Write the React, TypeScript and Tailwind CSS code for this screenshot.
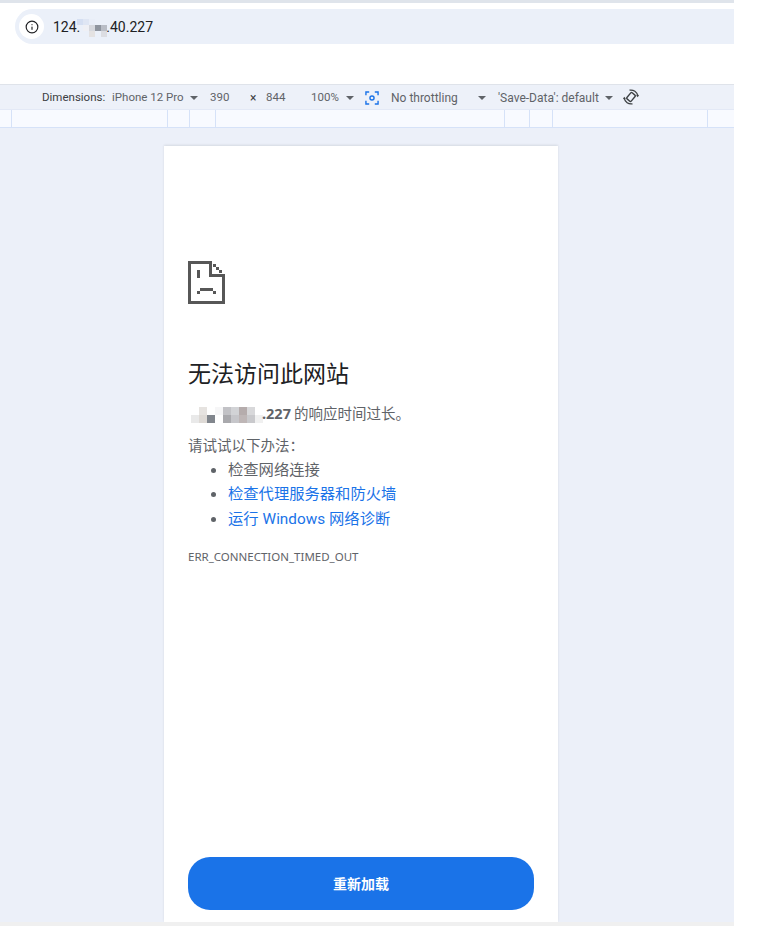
import React from 'react';
import { Info } from 'lucide-react';

const cjk = '[font-family:"Noto_Sans","Noto_Sans_CJK_SC",sans-serif]';

const Caret: React.FC<{ className?: string }> = ({ className }) => (
    <svg width="8" height="4" viewBox="0 0 8 4" className={className}>
        <path d="M0 0h8L4 4z" fill="#5f6368" />
    </svg>
);

const Mosaic: React.FC<{ cell: number; rows: string[][] }> = ({ cell, rows }) => (
    <span className="inline-flex flex-col align-middle">
        {rows.map((row, i) => (
            <span key={i} className="flex">
                {row.map((color, j) => (
                    <span key={j} style={{ width: cell, height: cell, background: color }} />
                ))}
            </span>
        ))}
    </span>
);

const addressMosaic = [
    ['#d5dff2', '#dfe6f4', '#e9eef8', 'transparent', 'transparent'],
    ['transparent', '#eff0f5', '#d6d8de', '#8f959f', '#b9bdc6'],
    ['transparent', 'transparent', '#e4e2e2', 'transparent', '#dcdde2'],
];

const hostMosaic = [
    ['#ffffff', '#e6e3e0', '#ffffff', '#f6f6f7', '#c2c2c6', '#d2d3d6', '#b5acac', '#d8d8da', '#ffffff'],
    ['#e9e9e9', '#dedad6', '#81868d', '#ffffff', '#a9a9ad', '#c6c6ca', '#beb6b6', '#c9c9cc', '#f0f0f0'],
];

const SadTab: React.FC = () => (
    <svg width="37" height="43" viewBox="0 0 37 43" fill="#575757" className="block">
        <rect x="0" y="0" width="3" height="43" />
        <rect x="0" y="0" width="24" height="3" />
        <rect x="0" y="40" width="37" height="3" />
        <rect x="34" y="13" width="3" height="30" />
        <rect x="21" y="0" width="3" height="16" />
        <rect x="21" y="13" width="16" height="3" />
        <rect x="25" y="3" width="3" height="3" />
        <rect x="28" y="6" width="3" height="3" />
        <rect x="31" y="9" width="3" height="3" />
        <rect x="9" y="9" width="3" height="8" />
        <rect x="12" y="27" width="13" height="3" />
        <rect x="9" y="30" width="3" height="3" />
        <rect x="25" y="30" width="3" height="3" />
    </svg>
);

const CaptureIcon: React.FC = () => (
    <svg width="14" height="14" viewBox="0 0 15 15" fill="none" stroke="#1a73e8" strokeWidth="1.500">
        <path d="M1 4.500V1h3.500M10.500 1H14v3.500M14 10.500V14h-3.500M4.500 14H1v-3.500" />
        <circle cx="7.500" cy="7.500" r="2.200" />
    </svg>
);

// device rotation: tilted phone between two arc arrows
const RotateIcon: React.FC<{ className?: string }> = ({ className }) => (
    <svg width="16" height="18" viewBox="0 0 16 18" fill="none" className={`shrink-0 ${className ?? ''}`}>
        <g transform="rotate(40 8 9)">
            <rect x="5.200" y="5" width="5.600" height="8" rx="1" stroke="#3c4043" strokeWidth="1.400" />
        </g>
        <path d="M6.500 2.200A7 7 0 0 1 14.800 8" stroke="#3c4043" strokeWidth="1.300" />
        <path d="M9.500 15.800A7 7 0 0 1 1.200 10" stroke="#3c4043" strokeWidth="1.300" />
        <path d="M16 6.800l-1.100 2.500-1.900-1.900zM0 11.200l1.100-2.500 1.900 1.900z" fill="#3c4043" />
    </svg>
);

const rulerCells = ['w-[12px]', 'w-[156px]', 'w-[22px]', 'w-[26px]', 'w-[289px]', 'w-[25px]', 'w-[23px]', 'w-[155px]'];

const App: React.FC = () => {
    return (
        <div className={`w-[779px] h-[926px] overflow-hidden bg-white flex flex-col ${cjk}`}>
            <div className="h-[3px] w-[734px] bg-[#dfe4eb]" />
            <div className="w-[734px] pl-[15px] pt-[6px]">
                <div className="h-[35px] bg-[#ebf0f9] rounded-l-[18px] flex items-center pl-1">
                    <div className="w-[25px] h-[25px] rounded-full bg-white flex items-center justify-center">
                        <Info size={14} strokeWidth={2} color="#202124" />
                    </div>
                    <span className="ml-[9px] pt-[2px] text-[14px] text-[#202124] flex items-center [font-family:Roboto,sans-serif]">
                        124.
                        <span className="-ml-[3px]">
                            <Mosaic cell={6} rows={addressMosaic} />
                        </span>
                        <span className="-ml-[1px]">.40.227</span>
                    </span>
                </div>
            </div>
            <div className="w-[734px] mt-[40px] h-[26px] pt-[2px] bg-[#edf1f9] border-t border-[#dfe3ea] border-b border-b-[#e3e9f6] flex items-center text-[12px] text-[#5f6368] whitespace-nowrap [font-family:Roboto,sans-serif]">
                <span className="ml-[42px] w-[63px] text-[11.500px] text-[#3c4043]">Dimensions:</span>
                <span className="ml-[7px] w-[73px] text-[11.500px]">iPhone 12 Pro</span>
                <Caret className="ml-[5px]" />
                <span className="ml-[12px] w-[19px] text-[11.500px]">390</span>
                <span className="ml-[21px] w-[8px] text-[#3c4043]">×</span>
                <span className="ml-[8px] w-[19px] text-[11.500px]">844</span>
                <span className="ml-[26px] w-[29px] text-[11.500px]">100%</span>
                <Caret className="ml-[6px]" />
                <span className="ml-[11px]"><CaptureIcon /></span>
                <span className="ml-[12px] w-[68px]">No throttling</span>
                <Caret className="ml-[19px]" />
                <span className="ml-[12px] w-[102px]">'Save-Data': default</span>
                <Caret className="ml-[5px]" />
                <RotateIcon className="ml-[10px] -mt-[2px]" />
            </div>
            <div className="w-[734px] h-[18px] bg-[#f8faff] border-b border-[#d6e2f8] flex">
                {rulerCells.map((w, i) => (
                    <div key={i} className={`${w} h-full border-r border-[#d6e2f8]`} />
                ))}
            </div>
            <div className="w-[734px] flex-1 min-h-0 bg-[#ecf0f9] pt-[18px] pl-[164px] flex">
                <div className="w-[394px] bg-white shadow-[0_-1px_2px_rgba(60,64,67,0.12)] px-6 pt-[115px] pb-3 flex flex-col">
                    <SadTab />
                    <h1 className="mt-[53px] text-[23px] leading-[32px] font-normal text-[#202124]">无法访问此网站</h1>
                    <p className="mt-[14px] text-[14.500px] leading-[20px] text-[#5f6368] flex items-center">
                        <span className="ml-[3px]">
                            <Mosaic cell={8} rows={hostMosaic} />
                        </span>
                        <b className="-ml-[1px]">.227</b>
                        <span className="ml-[3px]">的响应时间过长。</span>
                    </p>
                    <p className="mt-[12px] text-[14.500px] leading-[20px] text-[#5f6368]">请试试以下办法：</p>
                    <ul className="mt-[2px] ml-[40px] list-disc text-[15.300px] leading-[24.250px] text-[#5f6368]">
                        <li>检查网络连接</li>
                        <li><a className="text-[#1a73e8]">检查代理服务器和防火墙</a></li>
                        <li><a className="text-[#1a73e8]">运行 <span className="[font-family:Roboto,sans-serif]">Windows</span> 网络诊断</a></li>
                    </ul>
                    <p className="mt-[18px] text-[11.500px] leading-[16px] text-[#5f6368]">ERR_CONNECTION_TIMED_OUT</p>
                    <button className="mt-auto h-[53px] w-[346px] rounded-[22px] bg-[#1a73e8] text-white text-[14px] font-bold">
                        重新加载
                    </button>
                </div>
            </div>
            <div className="w-[734px] h-[4px] bg-[#f0f0f0]" />
        </div>
    );
};

export default App;
